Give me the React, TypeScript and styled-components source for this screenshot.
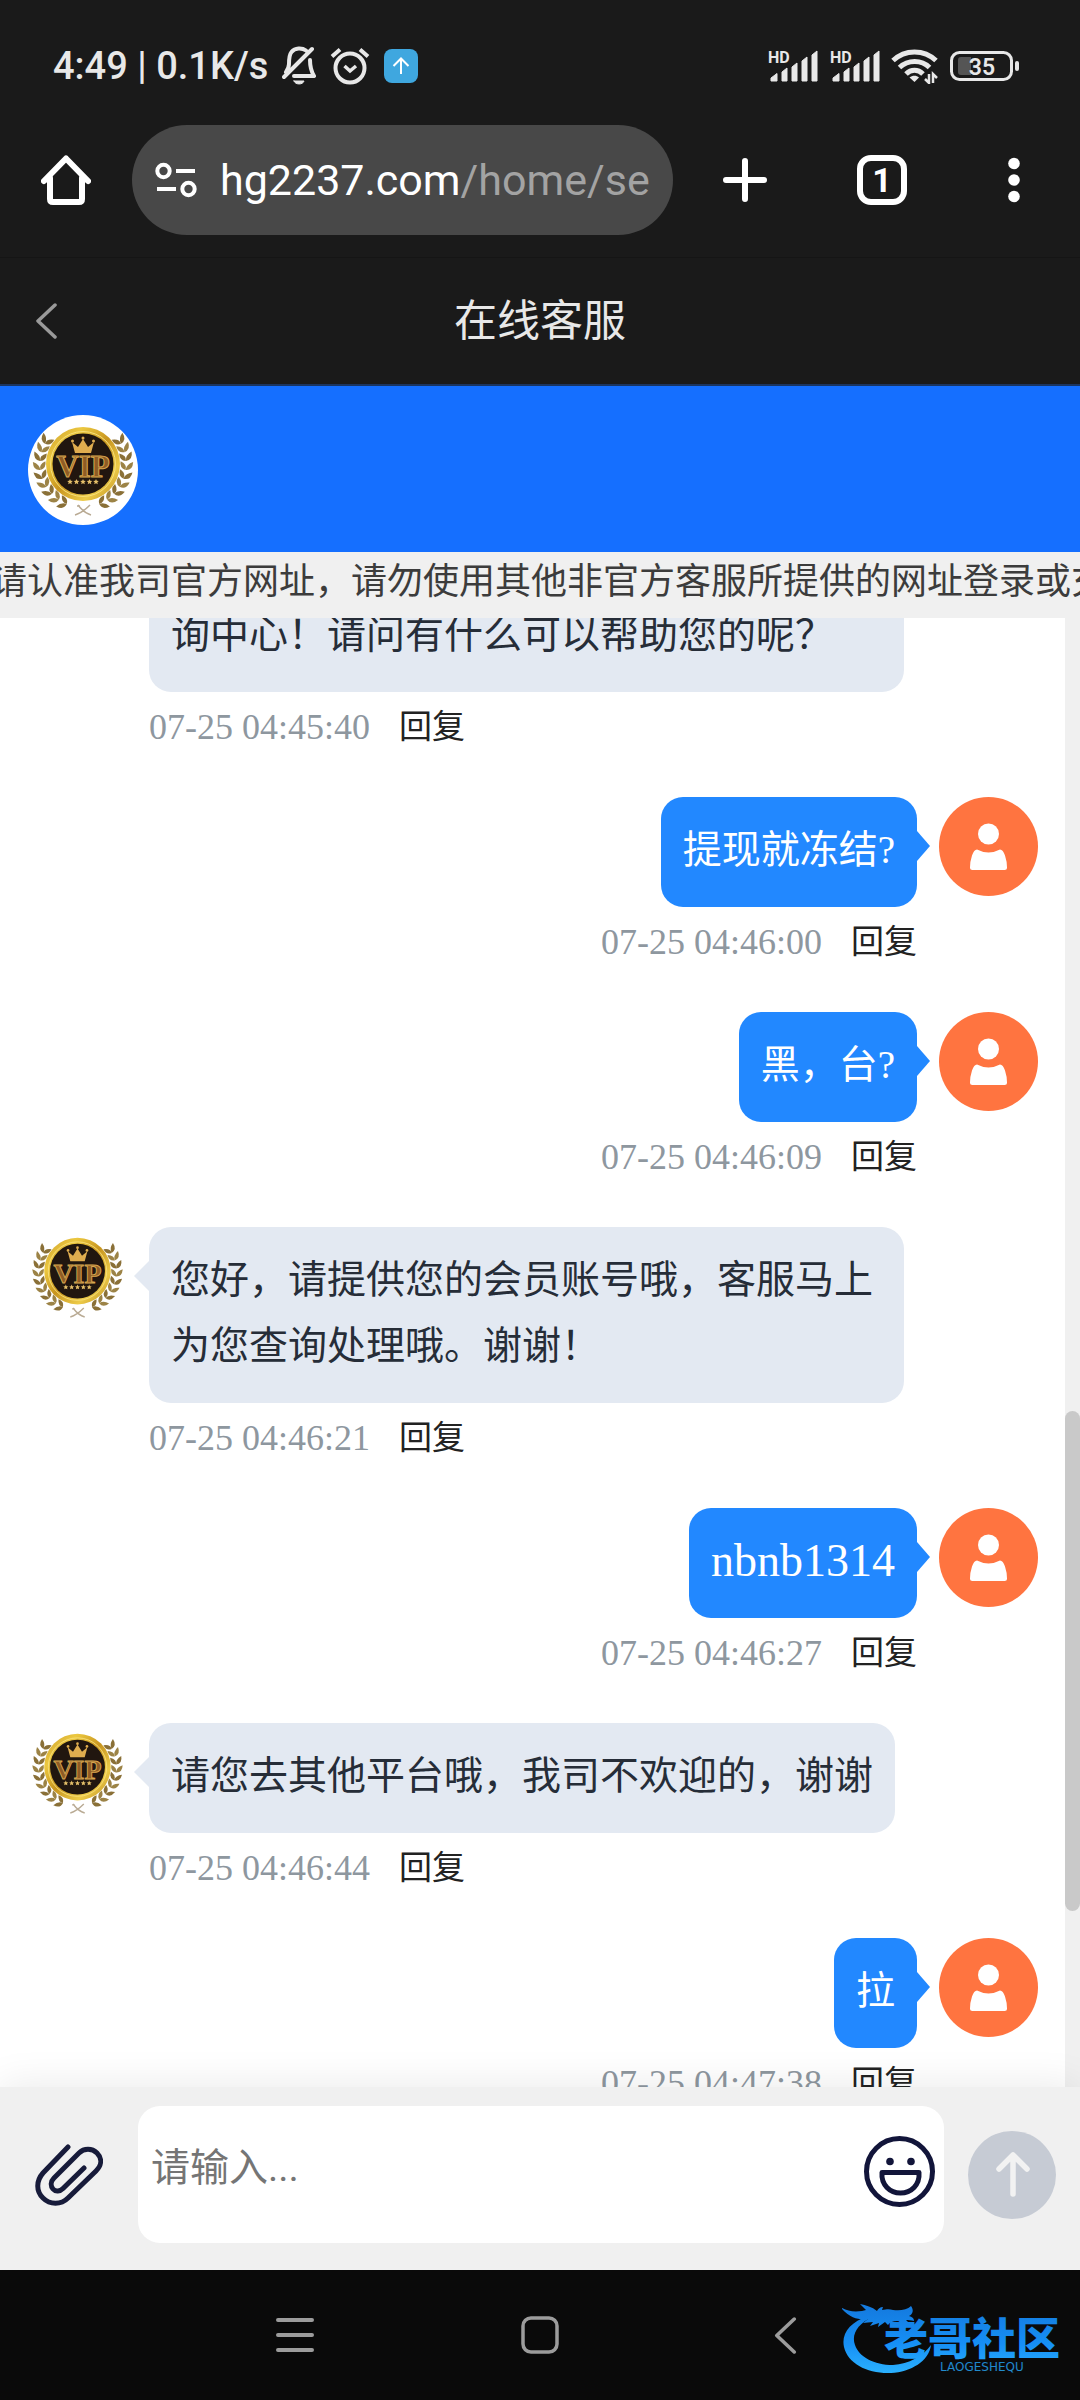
import React from "react";
import styled, { createGlobalStyle, css } from "styled-components";

const SANS = `Roboto, "Noto Sans CJK SC", sans-serif`;
const CHAT = `"Liberation Serif", "Noto Sans CJK SC", sans-serif`;

const GlobalStyle = createGlobalStyle`
  * { box-sizing: border-box; }
  body { margin: 0; background: #0a0a0a; }
  button { margin: 0; padding: 0; border: 0; background: none; color: inherit; font: inherit; cursor: pointer; }
  svg { display: block; flex: none; }
`;

const Screen = styled.div`
  display: flex;
  flex-direction: column;
  height: 100vh;
  min-height: 900px;
  overflow: hidden;
  background: #fff;
  font-family: ${SANS};
`;

/* ---------- system status bar ---------- */

const StatusBar = styled.div`
  display: flex;
  flex: none;
  align-items: center;
  justify-content: space-between;
  height: 110px;
  padding: 22px 60px 0 53px;
  background: #1a1a1a;
  color: #e8e8e8;
`;

const StatusGroup = styled.div<{ $gap: number }>`
  display: flex;
  align-items: center;
  gap: ${(p) => p.$gap}px;
`;

const StatusText = styled.span`
  font-size: 38px;
  font-weight: 500;
  line-height: 44px;
  white-space: pre;
`;

const Signal = () => (
  <svg width="51" height="34" viewBox="-1 0 51 34" fill="#e8e8e8">
    <text x="0" y="14" fontSize="16" fontWeight="700" fontFamily="Roboto, sans-serif">HD</text>
    <path d="M3 29l6-4.500v7.500H3zM14 23l5-4v13h-5zM24 18l5-4v18h-5zM34 12l5-4v24h-5zM44 6l5-4v30h-5z" stroke="#e8e8e8" strokeLinejoin="round" />
  </svg>
);

const MutedBell = () => (
  <svg width="34" height="40" viewBox="0 0 34 40" fill="none" stroke="#e8e8e8" strokeWidth="4" strokeLinecap="round" strokeLinejoin="round">
    <path d="M24 4.500C20 1.500 13 1.500 9.500 6 7 9 7 13 7 18c0 3-1 5-3 8M28 14c0 7 1 11 4 16H12M2 31L30 3" />
    <path d="M12 35h10c-1 4-9 4-10 0z" fill="#e8e8e8" strokeWidth="1" />
  </svg>
);

const Alarm = () => (
  <svg width="40" height="38" viewBox="0 0 40 38" fill="none" stroke="#e8e8e8" strokeWidth="4">
    <circle cx="20" cy="21" r="14.500" />
    <path d="M2 9.500L10 2.500M38 9.500L30 2.500" />
    <path d="M14.500 19l5.500 5 6-5" strokeWidth="3.500" />
  </svg>
);

const UploadBadge = () => (
  <svg width="34" height="34" viewBox="0 0 34 34" fill="none">
    <rect width="34" height="34" rx="8" fill="#3fa7df" />
    <path d="M17 25V10M9.500 17L17 9.500 24.500 17" stroke="#fff" strokeWidth="2" />
  </svg>
);

const Wifi = () => (
  <svg width="48" height="36" viewBox="0 0 48 36" fill="none" stroke="#e8e8e8" strokeWidth="5">
    <path d="M2 12.500C14 1 33 1 45 12.500" />
    <path d="M8.500 19.500c8.500-8 22-8 30 0" />
    <path d="M15 26c5-5 12-5 17 0" />
    <path d="M18.500 29.500c3-2.500 7-2.500 9.500 0L23.500 34z" fill="#e8e8e8" stroke="none" />
    <path d="M38 26v9l-4-4M42 35v-9l4 4" strokeWidth="2.500" />
  </svg>
);

const Battery = () => (
  <svg width="70" height="32" viewBox="0 0 70 32">
    <rect x="1.500" y="2.500" width="60" height="27" rx="8" fill="none" stroke="#e8e8e8" strokeWidth="3" />
    <path d="M11 7h10v18H11q-3 0-3-3V10q0-3 3-3z" fill="#555" />
    <rect x="65" y="11" width="4" height="10" rx="2" fill="#e8e8e8" />
    <text x="32" y="24.500" textAnchor="middle" fontSize="23" fontWeight="600" fontFamily="Roboto, sans-serif" fill="#e8e8e8">35</text>
  </svg>
);

/* ---------- browser toolbar ---------- */

const Toolbar = styled.header`
  display: flex;
  flex: none;
  align-items: center;
  height: 148px;
  padding: 14px 49px 22px 41px;
  border-bottom: 1px solid #151515;
  background: #1a1a1a;
  color: #fff;
`;

const AddressBar = styled.button`
  display: flex;
  flex: 1;
  align-items: center;
  gap: 23px;
  min-width: 0;
  height: 110px;
  margin: 0 50px 0 41px;
  padding: 0 22px 0 23px;
  border-radius: 55px;
  background: #484848;
`;

const Url = styled.span`
  flex: 1;
  overflow: hidden;
  font-size: 43px;
  line-height: 60px;
  text-align: left;
  white-space: nowrap;
`;

const UrlPath = styled.span`
  color: #a3a3a3;
`;

const ToolbarActions = styled.div`
  display: flex;
  align-items: center;
  gap: 90px;
`;

const TabCount = styled.button`
  width: 50px;
  height: 50px;
  border: 6px solid #fff;
  border-radius: 14px;
  font-size: 34px;
  font-weight: 700;
  line-height: 38px;
`;

/* ---------- page header ---------- */

const TitleBar = styled.div`
  display: grid;
  flex: none;
  grid-template-columns: 1fr auto 1fr;
  align-items: center;
  height: 128px;
  padding: 0 35px;
  border-bottom: 2px solid #1b3560;
  background: #1a1a1a;
  color: #e8e8e8;
`;

const Title = styled.h1`
  margin: 0;
  font-size: 43px;
  font-weight: 400;
  line-height: 60px;
`;

const AgentBanner = styled.div`
  flex: none;
  padding: 29px 28px 27px;
  background: #156fff;
`;

const AgentPhoto = styled.div`
  width: 110px;
  height: 110px;
  border-radius: 50%;
  background: #fff;
`;

const Notice = styled.p`
  flex: none;
  height: 66px;
  margin: 0;
  overflow: hidden;
  background: #f0f0f0;
  color: #3c3c3c;
  font-size: 36px;
  line-height: 60px;
  text-indent: -9px;
  white-space: nowrap;
`;

/* ---------- conversation ---------- */

const Conversation = styled.main`
  display: grid;
  flex: 1;
  grid-template-columns: 1fr 15px;
  min-height: 0;
  overflow: hidden;
`;

const MessageList = styled.div`
  display: flex;
  flex-direction: column;
  min-height: 0;
  margin-top: -36px;
  padding: 0 27px 0 28px;
  font-family: ${CHAT};
`;

const Row = styled.article<{ $mine: boolean }>`
  display: flex;
  flex: none;
  flex-direction: ${(p) => (p.$mine ? "row-reverse" : "row")};
  gap: 22px;
  margin-bottom: 48px;
`;

const Column = styled.div<{ $mine: boolean; $wide: boolean }>`
  display: flex;
  flex-direction: column;
  align-items: ${(p) => (p.$mine ? "flex-end" : "flex-start")};
  max-width: 755px;
  ${(p) => p.$wide && css`
    flex: 1;
    align-items: stretch;
  `}
`;

const AvatarSlot = styled.div`
  flex: none;
  width: 99px;
  height: 99px;
`;

const Bubble = styled.p<{ $mine: boolean; $latin: boolean; $tail: boolean }>`
  position: relative;
  margin: 0;
  padding: 20px 22px 24px;
  border-radius: 22px;
  background: ${(p) => (p.$mine ? "#2288ff" : "#e3e9f2")};
  color: ${(p) => (p.$mine ? "#fff" : "#262d38")};
  font-size: ${(p) => (p.$latin ? 46 : 39)}px;
  line-height: 66px;

  &::after {
    content: "";
    display: ${(p) => (p.$tail ? "block" : "none")};
    position: absolute;
    top: 34px;
    ${(p) => (p.$mine ? "left: 100%" : "right: 100%")};
    border: 15px solid transparent;
    ${(p) => p.$mine
      ? css`border-right-width: 0; border-left: 13px solid #2288ff;`
      : css`border-left-width: 0; border-right: 15px solid #e3e9f2;`}
  }
`;

const Meta = styled.div`
  display: flex;
  align-items: center;
  gap: 29px;
  margin-top: 13px;
  line-height: 44px;
`;

const Time = styled.time`
  color: #8e979f;
  font-size: 36px;
`;

const Reply = styled.button`
  color: #222;
  font-size: 33px;
`;

const ScrollTrack = styled.div`
  position: relative;
  background: #f0f0f0;
`;

const ScrollThumb = styled.div`
  position: absolute;
  top: 54%;
  right: 0;
  left: 0;
  height: 34%;
  border-radius: 8px;
  background: #c9c9c9;
`;

/* ---------- composer ---------- */

const Composer = styled.form`
  position: relative;
  display: flex;
  flex: none;
  align-items: center;
  padding: 19px 24px 27px 35px;
  background: #f0f0f0;
  box-shadow: 0 -4px 36px rgba(0, 0, 0, 0.08);
`;

const InputBox = styled.div`
  display: flex;
  flex: 1;
  align-items: center;
  gap: 12px;
  margin: 0 24px 0 35px;
  padding: 0 9px 6px 13px;
  border-radius: 22px;
  background: #fff;
`;

const TextArea = styled.textarea`
  display: block;
  flex: 1;
  min-width: 0;
  height: 131px;
  padding: 29px 0 0;
  border: 0;
  outline: 0;
  background: transparent;
  color: #262d38;
  font-family: ${SANS};
  font-size: 39px;
  line-height: 66px;
  resize: none;

  &::placeholder {
    color: #757575;
  }
`;

/* ---------- system navigation ---------- */

const SystemNav = styled.nav`
  position: relative;
  display: flex;
  flex: none;
  align-items: center;
  justify-content: center;
  gap: 207px;
  height: 130px;
  background: #0a0a0a;
`;

const Watermark = styled.div`
  position: absolute;
  right: 16px;
  bottom: 22px;
`;

/* ---------- drawings ---------- */

const leafAngles = [112, 124, 136, 148, 160, 172, 184, 196, 208];

const Laurel = () => (
  <g>
    {leafAngles.map((a, i) => {
      const rad = (a * Math.PI) / 180;
      const x = 55 + 43 * Math.cos(rad);
      const y = 49 + 43 * Math.sin(rad);
      return (
        <g key={a} transform={`translate(${x} ${y})`} fill={i % 2 ? "#9c8346" : "#8a7037"}>
          <path d="M0 0Q4-6 11-1 5 3 0 0z" transform={`rotate(${a + 60})`} />
          <path d="M0 0Q4-4 10 1 4 5 0 0z" transform={`rotate(${a + 122})`} />
        </g>
      );
    })}
  </g>
);

const VipBadge = ({ size, id }: { size: number; id: string }) => (
  <svg width={size} height={size} viewBox="0 0 110 110" role="img" aria-label="VIP">
    <defs>
      <linearGradient id={id} x1="0" y1="0" x2="1" y2="1">
        <stop offset="0" stopColor="#c99a2a" />
        <stop offset="0.250" stopColor="#ecc840" />
        <stop offset="0.500" stopColor="#c8951f" />
        <stop offset="0.750" stopColor="#edcb48" />
        <stop offset="1" stopColor="#b98820" />
      </linearGradient>
    </defs>
    <Laurel />
    <g transform="translate(110 0) scale(-1 1)"><Laurel /></g>
    <path d="M47 100q7-2 15-10M63 100q-7-2-13-10M49 91h3" fill="none" stroke="#b9aa93" strokeWidth="1.500" />
    <circle cx="55" cy="49" r="37" fill={`url(#${id})`} />
    <circle cx="55" cy="49" r="32.500" fill="none" stroke="#f7e07a" strokeWidth="1" />
    <circle cx="55" cy="49" r="30.500" fill="#21160f" />
    <path d="M47 38l-3-11 6 5 5-8 5 8 6-5-3 11z" fill="#e0ad4f" />
    <g fill="#e0ad4f">
      <circle cx="44.500" cy="26" r="1.500" />
      <circle cx="55" cy="23" r="1.500" />
      <circle cx="65.500" cy="26" r="1.500" />
    </g>
    <text x="55" y="62" textAnchor="middle" fontFamily="Liberation Serif, serif" fontWeight="700" fontSize="31" fill="#8f5c25" stroke="#d8a850" strokeWidth="1">VIP</text>
    <g fill="#e6c06a">
      {[42, 48.5, 55, 61.5, 68].map((x) => (
        <path key={x} d={`M${x} 64l.8 1.800 2 .2-1.500 1.300.5 2-1.800-1-1.800 1 .5-2-1.500-1.300 2-.2z`} />
      ))}
    </g>
  </svg>
);

const UserAvatar = () => (
  <svg width="99" height="99" viewBox="0 0 99 99" fill="#fff">
    <circle cx="49.500" cy="49.500" r="49.500" fill="#ff7440" />
    <circle cx="49.500" cy="37" r="10.500" />
    <path d="M38 52.500q11.500 6 23 0 3 0 5 6t2 12q0 2.500-2.500 2.500h-32Q31 73 31 70.500q0-6 2-12t5-6z" />
  </svg>
);

const Home = () => (
  <svg width="50" height="52" viewBox="0 0 50 52" fill="none" stroke="#fff" strokeWidth="6" strokeLinejoin="round" strokeLinecap="round">
    <path d="M3 27L25 4.500 47 27" />
    <path d="M9 24v21q0 3 3 3h26q3 0 3-3V24" />
  </svg>
);

const SiteInfo = () => (
  <svg width="42" height="36" viewBox="0 0 42 36" fill="none" stroke="#fff" strokeWidth="4">
    <circle cx="8.500" cy="9" r="6.200" />
    <path d="M21 9h19M2 27h19" />
    <circle cx="33.500" cy="27" r="6.200" />
  </svg>
);

const Chevron = ({ color, width, height }: { color: string; width: number; height: number }) => (
  <svg width={width} height={height} viewBox="0 0 22 36" fill="none" stroke={color} strokeWidth="3.500" strokeLinecap="round" strokeLinejoin="round">
    <path d="M20 2L3 18l17 16" />
  </svg>
);

const Paperclip = () => (
  <svg width="68" height="64" viewBox="0 0 68 64" fill="none" stroke="#171b3a" strokeWidth="5" strokeLinecap="round">
    <path d="M33 4L8 30C1 38 1 48 8 55s18 7 25 0L61 28c6-6 6-13 1-18s-13-5-18 0L19 35c-3.500 3.500-3.500 8-1 11s7 2.500 10-.5L49 25" />
  </svg>
);

const Smile = () => (
  <svg width="71" height="71" viewBox="0 0 71 71" fill="none" stroke="#12153a" strokeWidth="5">
    <circle cx="35.500" cy="35.500" r="33" />
    <path d="M18 36.500h37C56 49 47 57 36.500 57S17 49 18 36.500z" strokeLinejoin="round" />
    <g fill="#12153a" stroke="none">
      <circle cx="26" cy="25.500" r="3.800" />
      <circle cx="47" cy="25.500" r="3.800" />
    </g>
  </svg>
);

const SendIcon = () => (
  <svg width="88" height="88" viewBox="0 0 88 88" fill="none">
    <circle cx="44" cy="44" r="44" fill="#c6cbd4" />
    <path d="M45 63V25M31 38l14-14 14 14" stroke="#f2f2f2" strokeWidth="5.500" strokeLinecap="round" strokeLinejoin="round" />
  </svg>
);

const DragonLogo = () => (
  <svg width="222" height="74" viewBox="0 0 222 74" role="img" aria-label="老哥社区">
    <defs>
      <linearGradient id="dragonBlue" gradientUnits="userSpaceOnUse" x1="0" y1="0" x2="0" y2="72">
        <stop offset="0" stopColor="#1479dd" />
        <stop offset="0.550" stopColor="#168ff5" />
        <stop offset="1" stopColor="#2db4ff" />
      </linearGradient>
    </defs>
    <g fill="url(#dragonBlue)">
      <path d="M26 12C8 18-1 30 2 43c4 17 24 27 47 26 20-1 38-12 40-28-8 11-22 19-38 20-19 0-34-8-38-20-4-11 3-21 17-28z" />
      <path d="M0 4c6 3 11 4 20 3l4-1-6-6c6 1 12 3 17 7 1-2 3-4 6-4l-1 3c5-1 8-1 11 0 7 1 14 0 18-4 3 4 2 8-2 10 3 1 5 2 5 5-3-1-6-1-8-1l4 4c-5-1-8-3-13-3-4 0-7 1-9 4l-3-3-7 5 1-4-9 3 3-4-10 1 5-4c-8 1-17 0-26-10z" />
      <text x="42" y="51" fontFamily="Noto Sans CJK SC, sans-serif" fontWeight="900" fontSize="44">老哥社区</text>
      <text x="98" y="67" fontFamily="DejaVu Sans, sans-serif" fontSize="12" opacity="0.800">LAOGESHEQU</text>
    </g>
  </svg>
);

/* ---------- data ---------- */

interface Message {
  mine: boolean;
  text: string;
  time: string;
  wide?: boolean;
  latin?: boolean;
}

const messages: Message[] = [
  { mine: false, text: "询中心！请问有什么可以帮助您的呢？", time: "07-25 04:45:40", wide: true },
  { mine: true, text: "提现就冻结?", time: "07-25 04:46:00" },
  { mine: true, text: "黑，台?", time: "07-25 04:46:09" },
  { mine: false, text: "您好，请提供您的会员账号哦，客服马上为您查询处理哦。谢谢！", time: "07-25 04:46:21" },
  { mine: true, text: "nbnb1314", time: "07-25 04:46:27", latin: true },
  { mine: false, text: "请您去其他平台哦，我司不欢迎的，谢谢", time: "07-25 04:46:44" },
  { mine: true, text: "拉", time: "07-25 04:47:38" },
];

const ChatMessage = ({ message, index }: { message: Message; index: number }) => (
  <Row $mine={message.mine}>
    <AvatarSlot>
      {message.mine ? <UserAvatar /> : !message.wide && <VipBadge size={99} id={`gold${index}`} />}
    </AvatarSlot>
    <Column $mine={message.mine} $wide={!!message.wide}>
      <Bubble $mine={message.mine} $latin={!!message.latin} $tail={!message.wide}>{message.text}</Bubble>
      <Meta>
        <Time>{message.time}</Time>
        <Reply type="button">回复</Reply>
      </Meta>
    </Column>
  </Row>
);

export default function App() {
  return (
    <Screen>
      <GlobalStyle />
      <StatusBar>
        <StatusGroup $gap={14}>
          <StatusText>4:49 | 0.1K/s</StatusText>
          <MutedBell />
          <Alarm />
          <UploadBadge />
        </StatusGroup>
        <StatusGroup $gap={11}>
          <Signal />
          <Signal />
          <Wifi />
          <Battery />
        </StatusGroup>
      </StatusBar>

      <Toolbar>
        <button type="button" aria-label="主页"><Home /></button>
        <AddressBar type="button">
          <SiteInfo />
          <Url>hg2237.com<UrlPath>/home/se</UrlPath></Url>
        </AddressBar>
        <ToolbarActions>
          <button type="button" aria-label="新标签页">
            <svg width="44" height="44" viewBox="0 0 44 44" stroke="#fff" strokeWidth="6" strokeLinecap="round">
              <path d="M22 3v38M3 22h38" />
            </svg>
          </button>
          <TabCount type="button">1</TabCount>
          <button type="button" aria-label="菜单">
            <svg width="34" height="46" viewBox="0 0 34 46" fill="#fff">
              <circle cx="17" cy="6.500" r="5.800" />
              <circle cx="17" cy="23" r="5.800" />
              <circle cx="17" cy="39.500" r="5.800" />
            </svg>
          </button>
        </ToolbarActions>
      </Toolbar>

      <TitleBar>
        <button type="button" aria-label="返回"><Chevron color="#9a9a9a" width={22} height={36} /></button>
        <Title>在线客服</Title>
      </TitleBar>
      <AgentBanner>
        <AgentPhoto><VipBadge size={110} id="goldBanner" /></AgentPhoto>
      </AgentBanner>
      <Notice>请认准我司官方网址，请勿使用其他非官方客服所提供的网址登录或充</Notice>

      <Conversation>
        <MessageList>
          {messages.map((message, index) => (
            <ChatMessage key={message.time} message={message} index={index} />
          ))}
        </MessageList>
        <ScrollTrack><ScrollThumb /></ScrollTrack>
      </Conversation>

      <Composer onSubmit={(e) => e.preventDefault()}>
        <button type="button" aria-label="附件"><Paperclip /></button>
        <InputBox>
          <TextArea aria-label="消息" placeholder="请输入..." />
          <button type="button" aria-label="表情"><Smile /></button>
        </InputBox>
        <button type="submit" aria-label="发送"><SendIcon /></button>
      </Composer>

      <SystemNav>
        <button type="button" aria-label="最近任务">
          <svg width="38" height="38" viewBox="0 0 38 38" stroke="#9c9c9c" strokeWidth="4" strokeLinecap="round">
            <path d="M2 4h34M2 19h34M2 34h34" />
          </svg>
        </button>
        <button type="button" aria-label="主屏幕">
          <svg width="38" height="38" viewBox="0 0 38 38" fill="none" stroke="#9c9c9c" strokeWidth="3.500">
            <rect x="2" y="2" width="34" height="34" rx="8" />
          </svg>
        </button>
        <button type="button" aria-label="后退"><Chevron color="#9c9c9c" width={38} height={37} /></button>
        <Watermark><DragonLogo /></Watermark>
      </SystemNav>
    </Screen>
  );
}
